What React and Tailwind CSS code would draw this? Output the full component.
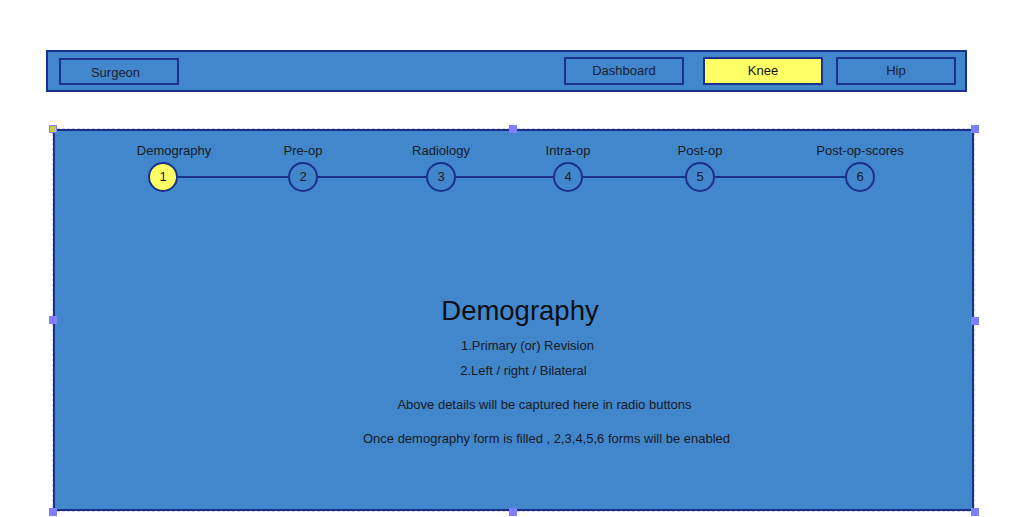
import React from "react";

const steps = [
  { label: "Demography", n: 1, active: true },
  { label: "Pre-op", n: 2 },
  { label: "Radiology", n: 3 },
  { label: "Intra-op", n: 4 },
  { label: "Post-op", n: 5 },
  { label: "Post-op-scores", n: 6 },
];
const connectors = ["w-[110px]", "w-[108px]", "w-[97px]", "w-[102px]", "w-[130px]"];

function NavButton({ children, className = "" }) {
  return (
    <div
      className={
        "w-[120px] border-2 border-[#1b3088] flex items-center justify-center text-[13px] leading-[16px] text-[#1a2033] " +
        className
      }
    >
      {children}
    </div>
  );
}

function Step({ label, n, active, first }) {
  return (
    <div className="flex w-[30px] flex-col items-center">
      <div
        className={
          "whitespace-nowrap text-[13px] leading-[16px] text-[#151a26] " +
          (first ? "translate-x-[11px]" : "")
        }
      >
        {label}
      </div>
      <div
        className={
          "mt-[3px] flex h-[30px] w-[30px] shrink-0 items-center justify-center rounded-full border-2 border-[#1b3088] text-[13px] leading-[16px] text-[#151a26] " +
          (active ? "bg-[#ffff66]" : "bg-[#4287cb]")
        }
      >
        {n}
      </div>
    </div>
  );
}

export default function App() {
  return (
    <div className="min-h-[517px] w-full bg-white pt-[50px] font-['Liberation_Sans',Arial,sans-serif]">
      <div className="ml-[46px] flex h-[42px] w-[921px] items-start border-2 border-[#1b3088] bg-[#4287cb]">
        <NavButton className="ml-[11px] mt-[6px] h-[27px] pr-[7px] pt-[2px]">Surgeon</NavButton>
        <div className="flex-1" />
        <NavButton className="mt-[5px] h-[28px]">Dashboard</NavButton>
        <NavButton className="ml-[19px] mt-[5px] h-[28px] bg-[#ffff66] text-[#111]">Knee</NavButton>
        <NavButton className="ml-[13px] mr-[9px] mt-[5px] h-[28px]">Hip</NavButton>
      </div>

      <div className="relative ml-[53px] mt-[37px] h-[382px] w-[921px] outline-1 outline-dashed outline-[#d0d0ff]">
        <div className="flex h-full flex-col border-2 border-[#1b3088] bg-[#4287cb]">
          <div className="ml-[93px] mt-[12px] flex items-start">
            {steps.map((s, i) => (
              <React.Fragment key={s.n}>
                <Step {...s} first={i === 0} />
                {i < connectors.length && (
                  <div className={"mt-[33px] h-[2px] bg-[#1b3088] " + connectors[i]} />
                )}
              </React.Fragment>
            ))}
          </div>

          <div className="mt-[103px] flex flex-col items-center text-[#161a24]">
            <div className="pl-[13px] text-[27.5px] leading-[32px] text-[#0d0f14]">Demography</div>
            <div className="mt-[11px] pl-[28px] text-[13px] leading-[16px]">1.Primary (or) Revision</div>
            <div className="mt-[9px] pl-[20px] text-[13px] leading-[16px]">2.Left / right / Bilateral</div>
            <div className="mt-[18px] pl-[62px] text-[13px] leading-[16px]">
              Above details will be captured here in radio buttons
            </div>
            <div className="mt-[18px] pl-[66px] text-[13px] leading-[16px]">
              Once demography form is filled , 2,3,4,5,6 forms will be enabled
            </div>
          </div>
        </div>

        {/* selection handles */}
        <div className="absolute left-[-4px] top-[-4px] h-[8px] w-[8px] border border-[#8080ff] bg-[#c8c850]" />
        <div className="absolute left-[456px] top-[-4px] h-[8px] w-[8px] bg-[#8080ff]" />
        <div className="absolute right-[-5px] top-[-4px] h-[8px] w-[8px] bg-[#8080ff]" />
        <div className="absolute left-[-4px] top-[187px] h-[8px] w-[8px] bg-[#8080ff]" />
        <div className="absolute right-[-5px] top-[188px] h-[8px] w-[8px] bg-[#8080ff]" />
        <div className="absolute bottom-[-5px] left-[-4px] h-[8px] w-[8px] bg-[#8080ff]" />
        <div className="absolute bottom-[-5px] left-[456px] h-[8px] w-[8px] bg-[#8080ff]" />
        <div className="absolute bottom-[-5px] right-[-5px] h-[8px] w-[8px] bg-[#8080ff]" />
      </div>
    </div>
  );
}
